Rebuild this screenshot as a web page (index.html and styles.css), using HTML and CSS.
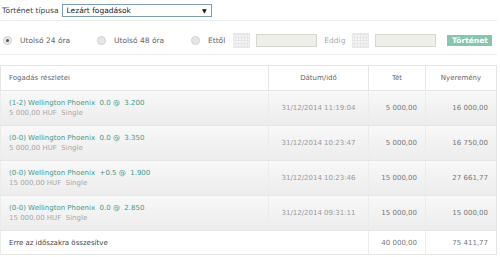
FILE: index.html
```html
<!DOCTYPE html>
<html lang="hu">
<head>
  <meta charset="UTF-8" />
  <title>Történet</title>
  <link rel="stylesheet" href="styles.css">
</head>
<body>
  <div class="page">
    <!-- típus választó -->
    <div class="type-row">
      <span class="label">Történet típusa</span>
      <div class="select">
        <span>Lezárt fogadások</span>
        <span class="arrow">&#9660;</span>
      </div>
    </div>

    <!-- időszak szűrő -->
    <div class="filter-row">
      <label class="radio-item"><span class="radio checked"></span>Utolsó 24 óra</label>
      <label class="radio-item"><span class="radio"></span>Utolsó 48 óra</label>
      <label class="radio-item"><span class="radio"></span>Ettől</label>
      <span class="calendar"></span>
      <span class="date-input"></span>
      <span class="muted">Eddig</span>
      <span class="calendar"></span>
      <span class="date-input"></span>
      <button class="btn">Történet</button>
    </div>

    <!-- táblázat -->
    <table class="bets">
      <thead>
        <tr>
          <th class="col-details">Fogadás részletei</th>
          <th class="col-date">Dátum/idő</th>
          <th class="col-stake">Tét</th>
          <th class="col-win">Nyeremény</th>
        </tr>
      </thead>
      <tbody>
        <tr>
          <td class="col-details">
            <div class="pick">(1-2) Wellington Phoenix &nbsp;0.0 @ &nbsp;3.200</div>
            <div class="sub">5 000,00 HUF &nbsp;Single</div>
          </td>
          <td class="col-date">31/12/2014 11:19:04</td>
          <td class="num">5 000,00</td>
          <td class="num">16 000,00</td>
        </tr>
        <tr>
          <td class="col-details">
            <div class="pick">(0-0) Wellington Phoenix &nbsp;0.0 @ &nbsp;3.350</div>
            <div class="sub">5 000,00 HUF &nbsp;Single</div>
          </td>
          <td class="col-date">31/12/2014 10:23:47</td>
          <td class="num">5 000,00</td>
          <td class="num">16 750,00</td>
        </tr>
        <tr>
          <td class="col-details">
            <div class="pick">(0-0) Wellington Phoenix &nbsp;+0.5 @ &nbsp;1.900</div>
            <div class="sub">15 000,00 HUF &nbsp;Single</div>
          </td>
          <td class="col-date">31/12/2014 10:23:46</td>
          <td class="num">15 000,00</td>
          <td class="num">27 661,77</td>
        </tr>
        <tr>
          <td class="col-details">
            <div class="pick">(0-0) Wellington Phoenix &nbsp;0.0 @ &nbsp;2.850</div>
            <div class="sub">15 000,00 HUF &nbsp;Single</div>
          </td>
          <td class="col-date">31/12/2014 09:31:11</td>
          <td class="num">15 000,00</td>
          <td class="num">15 000,00</td>
        </tr>
      </tbody>
      <tfoot>
        <tr>
          <td colspan="2" class="col-details total">Erre az időszakra összesítve</td>
          <td class="num">40 000,00</td>
          <td class="num">75 411,77</td>
        </tr>
      </tfoot>
    </table>
  </div>
</body>
</html>
```

FILE: styles.css
```css
body {
  margin: 0;
  font-family: "DejaVu Sans", Verdana, sans-serif;
  font-size: 7px;
  color: #555;
  background: #fff;
}

.page {
  width: 497px;
}

.type-row {
  display: flex;
  align-items: center;
  gap: 3px;
  height: 20px;
  padding-left: 2px;
  border-bottom: 1px solid #ececec;
  margin-bottom: 5px;
}

.type-row .label {
  color: #444;
  font-size: 7.5px;
}

.select {
  display: flex;
  justify-content: space-between;
  align-items: center;
  width: 140px;
  height: 11px;
  padding: 0 4px;
  border: 1px solid #7f9db9;
  color: #222;
  font-size: 7.5px;
}

.select .arrow {
  font-size: 6px;
  color: #111;
}

.filter-row {
  display: flex;
  align-items: center;
  height: 28px;
  padding-left: 3px;
  border-bottom: 1px solid #ececec;
  margin-bottom: 10px;
}

.radio-item {
  display: flex;
  align-items: center;
  gap: 8px;
  width: 94px;
  color: #666;
  font-size: 7.5px;
}

.radio-item:nth-child(3) {
  width: auto;
  margin-right: 8px;
}

.radio {
  width: 7px;
  height: 7px;
  border: 1px solid #d2d2d2;
  border-radius: 50%;
  background: #e6e6e6;
  position: relative;
}

.radio.checked::after {
  content: "";
  position: absolute;
  left: 2px;
  top: 2px;
  width: 3px;
  height: 3px;
  border-radius: 50%;
  background: #555;
}

.calendar {
  width: 15px;
  height: 13px;
  border: 1px solid #e8e8e8;
  background-color: #f6f6f6;
  background-image:
    linear-gradient(#e6e6e6 1px, transparent 1px),
    linear-gradient(90deg, #e6e6e6 1px, transparent 1px);
  background-size: 3px 3px;
  background-position: 1px 3px;
  margin-right: 6px;
}

.date-input {
  width: 59px;
  height: 11px;
  border: 1px solid #d6d6d0;
  background: #efefe9;
}

.muted {
  color: #aaa;
  margin: 0 7px;
  font-size: 7.5px;
}

.btn {
  margin-left: 11px;
  width: 45px;
  height: 11px;
  padding: 0;
  border: none;
  background: #86c6b1;
  color: #fff;
  font-family: inherit;
  font-size: 7.5px;
  font-weight: bold;
  line-height: 11px;
}

.bets {
  width: 497px;
  border-collapse: collapse;
  border: 1px solid #e6e6e6;
}

.bets th {
  height: 24px;
  font-weight: normal;
  color: #666;
  border: 1px solid #e6e6e6;
  background: #fff;
  padding: 0;
}

.bets th.col-details {
  text-align: left;
  padding-left: 8px;
  width: 259px;
}

.bets th.col-date {
  width: 99px;
}

.bets th.col-stake {
  width: 56px;
}

.bets td {
  height: 34px;
  padding: 0;
  border-top: 1px solid #e6e6e6;
  border-bottom: 1px solid #e6e6e6;
  border-left: 1px solid #ececec;
}

.bets tbody tr {
  background: linear-gradient(#f8f8f8, #ececec);
}

.bets td.col-details {
  padding-left: 8px;
  line-height: 10px;
}

.pick {
  color: #3c9c8c;
}

.sub {
  color: #a8a8a8;
}

.bets td.col-date {
  text-align: center;
  color: #999;
}

.bets td.num {
  text-align: right;
  padding-right: 8px;
  color: #777;
}

.bets tfoot td {
  height: 23px;
  background: #fff;
}

.bets td.total {
  color: #444;
}
```
